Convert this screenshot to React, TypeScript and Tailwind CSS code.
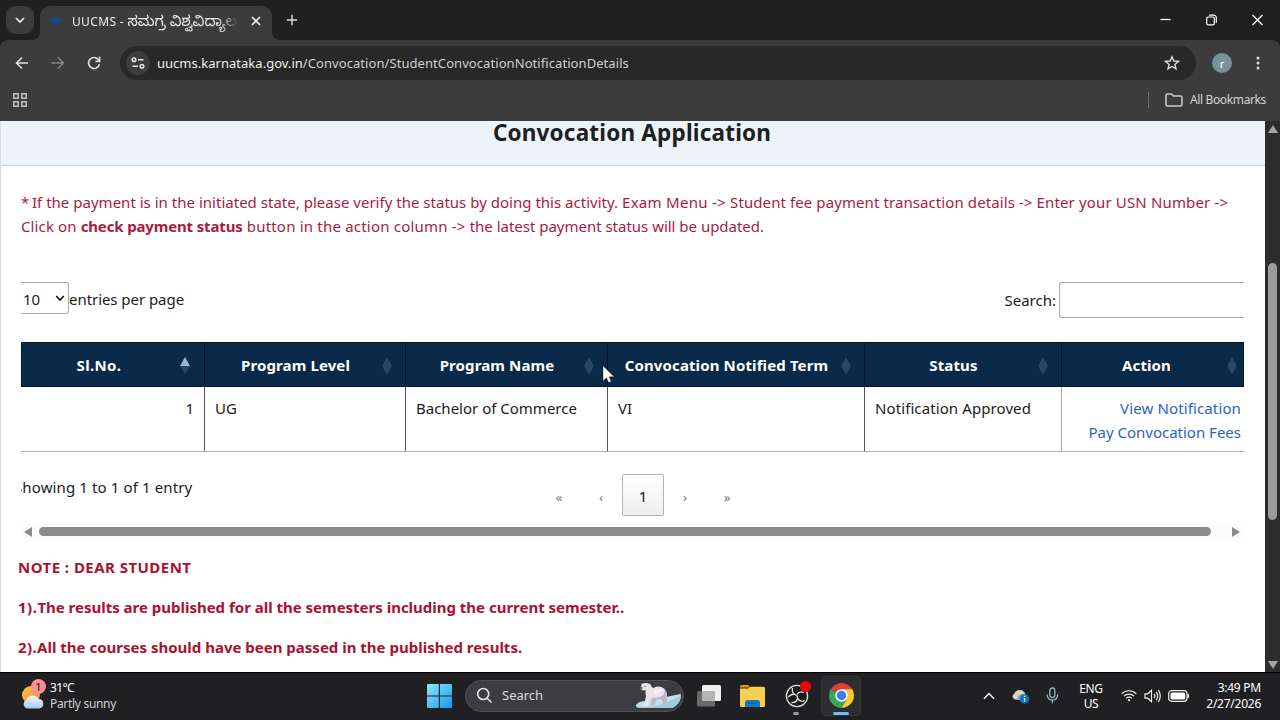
import { ReactNode } from "react";

function SortMark({ asc = false }: { asc?: boolean }) {
  return (
    <svg width="12" height="20" viewBox="0 0 12 20" className="shrink-0">
      <path d="M6 1 11 10H1Z" fill={asc ? "#9fb3d3" : "#274766"} />
      <path d="M1 10H11L6 18.5Z" fill="#274766" />
    </svg>
  );
}

function HeadCell({ children, asc, className }: { children: ReactNode; asc?: boolean; className: string }) {
  return (
    <div className={"flex items-center border-r border-[#02132b] pt-0.5 " + className}>
      <span className="flex-1 text-center whitespace-nowrap">{children}</span>
      <SortMark asc={asc} />
    </div>
  );
}

function TabStrip() {
  return (
    <div className="flex h-10 shrink-0 bg-[#202020]">
      <div className="flex w-10 items-start pt-1.5 pl-1.5">
        <button className="flex h-7 w-7 items-center justify-center rounded-[9px] bg-[#3c3c3c]">
          <svg width="12" height="12" viewBox="0 0 12 12" fill="none" stroke="#f1f1f1" strokeWidth="1.7"><path d="M2 4l4 4 4-4" /></svg>
        </button>
      </div>
      <div className="relative flex w-[232px] items-start pt-1.5">
        <svg className="absolute bottom-0 -left-2" width="8" height="8"><path d="M8 0V8H0A8 8 0 0 0 8 0Z" fill="#3c3c3c" /></svg>
        <svg className="absolute -right-2 bottom-0" width="8" height="8"><path d="M0 0V8H8A8 8 0 0 1 0 0Z" fill="#3c3c3c" /></svg>
        <div className="flex h-[34px] w-full items-center rounded-t-[10px] bg-[#3c3c3c] pb-1 pl-[9px]">
          <svg width="14" height="12" viewBox="0 0 14 12"><path d="M7 1.500 14 5 7 8.500 0 5Z" fill="#164a83" /><path d="M3 6v3q4 2.500 8 0V6L7 8Z" fill="#164a83" /></svg>
          <div className="ml-[9px] h-6 w-[167px] overflow-hidden [mask-image:linear-gradient(to_right,black_88%,transparent)]">
            <div className="text-[12px] leading-[23px] whitespace-nowrap text-[#ececec]">
              <span className="tracking-[0.350px]">UUCMS - </span><span className="text-[14.500px] leading-[22px]">ಸಮಗ್ರ ವಿಶ್ವವಿದ್ಯಾಲಯ</span>
            </div>
          </div>
          <svg className="ml-[12px]" width="10" height="10" viewBox="0 0 10 10" stroke="#f1f1f1" strokeWidth="1.600"><path d="M1 1l8 8M9 1 1 9" /></svg>
        </div>
      </div>
      <div className="flex flex-1 items-center justify-between pl-[14px]">
        <svg width="12" height="12" viewBox="0 0 12 12" stroke="#e0e0e0" strokeWidth="1.400"><path d="M6 .8v10.400M.8 6h10.400" /></svg>
        <div className="flex items-center gap-[35px] pr-[17px]">
          <svg width="11" height="12" viewBox="0 0 11 12" stroke="#fff" strokeWidth="1.300"><path d="M.5 5.500h10" /></svg>
          <svg width="11" height="12" viewBox="0 0 11 12" fill="none" stroke="#fff" strokeWidth="1.200"><rect x=".7" y="3" width="7.600" height="7.800" rx="1.600" /><path d="M3 1.200h4.800a2.500 2.500 0 0 1 2.500 2.500v5" /></svg>
          <svg width="11" height="12" viewBox="0 0 11 12" stroke="#fff" strokeWidth="1.300"><path d="M.5 1l10 10M10.500 1l-10 10" /></svg>
        </div>
      </div>
    </div>
  );
}

function Toolbar() {
  return (
    <div className="h-[81px] shrink-0 bg-[#202020]">
      <div className="h-full rounded-t-lg bg-[#3c3c3c]">
        <div className="flex h-[46px] items-center">
          <svg className="ml-[14px]" width="16" height="14" viewBox="0 0 16 14" fill="none" stroke="#dedede" strokeWidth="1.600"><path d="M14 7H2.500M8 1.500 2.500 7 8 12.500" /></svg>
          <svg className="ml-5" width="16" height="14" viewBox="0 0 16 14" fill="none" stroke="#858585" strokeWidth="1.500"><path d="M1.500 7h12M8 1.500 13.500 7 8 12.500" /></svg>
          <svg className="ml-5" width="16" height="16" viewBox="0 0 16 16" fill="none" stroke="#dedede" strokeWidth="1.700"><path d="M13.400 9.200A5.500 5.500 0 1 1 12.200 4.400L13.800 6" /><path d="M13.600 1.800V6.300H9.400" /></svg>
          <div className="ml-[18px] flex h-[34px] w-[1076px] items-center rounded-full bg-[#282828] pr-[16px] pl-1.5">
            <div className="flex h-6 w-6 items-center justify-center rounded-full bg-[#3c3c3c]">
              <svg width="14" height="12" viewBox="0 0 14 12" fill="none" stroke="#e6e6e6" strokeWidth="1.500"><circle cx="3" cy="2.700" r="1.800" /><path d="M7 2.700h5.500M1.500 9.300h5.500" /><circle cx="11" cy="9.300" r="1.800" /></svg>
            </div>
            <div className="ml-[7px] flex-1 pt-0.5 text-[13px] tracking-[0.070px] whitespace-nowrap text-[#cfcfcf]"><span className="tracking-[0.020px] text-[#efefef]">uucms.karnataka.gov.in</span>/Convocation/StudentConvocationNotificationDetails</div>
            <svg width="16" height="16" viewBox="0 0 16 16" fill="none" stroke="#dcdcdc" strokeWidth="1.400"><path d="M8 1.800 9.800 6l4.600.4-3.500 3 1.100 4.500L8 11.500l-4 2.400 1.100-4.500-3.500-3L6.200 6Z" /></svg>
          </div>
          <div className="ml-4 flex h-5 w-5 items-center justify-center rounded-full bg-[#78909c] text-[11px] leading-none text-white">r</div>
          <svg className="ml-[24px]" width="4" height="14" fill="#dcdcdc"><circle cx="2" cy="2" r="1.500" /><circle cx="2" cy="7" r="1.500" /><circle cx="2" cy="12" r="1.500" /></svg>
        </div>
        <div className="flex h-[28px] items-center justify-between pr-[14px] pl-[13px]">
          <svg width="14" height="14" viewBox="0 0 14 14" fill="none" stroke="#c4c4c4" strokeWidth="1.500"><rect x=".8" y=".8" width="4.400" height="4.400" /><rect x="8.800" y=".8" width="4.400" height="4.400" /><rect x=".8" y="8.800" width="4.400" height="4.400" /><rect x="8.800" y="8.800" width="4.400" height="4.400" /></svg>
          <div className="flex items-center">
            <div className="h-4 w-px bg-[#6a6a6a]" />
            <svg className="ml-4" width="18" height="14" viewBox="0 0 18 14" fill="none" stroke="#cdcdcd" strokeWidth="1.500"><path d="M1 11.500V2.500A1.500 1.500 0 0 1 2.500 1H6.500L8.300 2.900H15.500A1.500 1.500 0 0 1 17 4.400V11.500A1.500 1.500 0 0 1 15.500 13H2.500A1.500 1.500 0 0 1 1 11.500Z" /></svg>
            <span className="ml-[7px] text-[12px] tracking-[-0.370px] text-[#d2d2d2]">All Bookmarks</span>
          </div>
        </div>
      </div>
    </div>
  );
}

function DataTable() {
  return (
    <div className="w-[1223px] overflow-hidden">
      <div className="flex h-[38px] items-start justify-between">
        <div className="flex h-8 items-center">
          <div className="flex h-8 w-[48px] items-center justify-between rounded-r-[3px] border border-l-0 border-[#aaa] pr-[3px] pl-[2px]">
            <span className="pt-0.5">10</span>
            <svg width="10" height="8" viewBox="0 0 10 8" fill="none" stroke="#111" strokeWidth="1.600"><path d="M1.200 2 5 6 8.800 2" /></svg>
          </div>
          <span className="pt-0.5 whitespace-nowrap tracking-[-0.050px]">entries per page</span>
        </div>
        <div className="flex items-center">
          <span>Search:</span>
          <div className="ml-[3px] h-9 w-[185px] rounded-l-[3px] border border-r-0 border-[#aaa]" />
        </div>
      </div>
      <div className="mt-[22px] flex h-[45px] border-y border-[#02132b] bg-[#0b2948] font-bold tracking-[0.120px] text-white">
        <HeadCell asc className="w-[184px] border-l pr-[13px]"><span className="pr-[3px] tracking-[0.350px]">Sl.No.</span></HeadCell>
        <HeadCell className="w-[201px] pr-[12px] pl-[5px]">Program Level</HeadCell>
        <HeadCell className="w-[202px] pr-[12px] pl-[5px]">Program Name</HeadCell>
        <HeadCell className="w-[257px] pr-[12px] pl-[5px]">Convocation Notified Term</HeadCell>
        <HeadCell className="w-[197px] pr-[12px] pl-[5px]">Status</HeadCell>
        <HeadCell className="w-[182px] pr-[5px] pl-[5px]">Action</HeadCell>
      </div>
      <div className="flex h-[65px] border-b border-[#b3b3b3] leading-6 whitespace-nowrap *:border-[#555] *:pt-[9px]">
        <div className="w-[184px] border-r pr-2.5 text-right">1</div>
        <div className="w-[201px] border-r pl-2.5">UG</div>
        <div className="w-[202px] border-r pl-2.5">Bachelor of Commerce</div>
        <div className="w-[257px] border-r pl-2.5">VI</div>
        <div className="w-[197px] border-r border-r-[#aaa]! pl-2.5 tracking-[0.097px]">Notification Approved</div>
        <div className="w-[182px] pr-[3px] text-right text-[#2b62c4]">
          <a className="block tracking-[0.130px]">View Notification</a>
          <a className="block">Pay Convocation Fees</a>
        </div>
      </div>
      <div className="flex h-[72px] pt-[22px]">
        <div className="flex h-[26px] w-[517px] items-center tracking-[0.120px]">
          <div className="flex w-[180px] justify-start overflow-hidden"><span className="ml-[-7px] whitespace-nowrap">Showing 1 to 1 of 1 entry</span></div>
        </div>
        <div className="flex h-[42px] text-[#777] *:flex *:w-[42px] *:items-center *:justify-center">
          <span className="pt-1.5 text-[13px]">«</span>
          <span className="pt-1.5 text-[13px]">‹</span>
          <span className="rounded-[2px] border border-[#b3b3b3] bg-gradient-to-b from-white to-[#eeeeee] pt-0.5 text-[#111]">1</span>
          <span className="pt-1.5 text-[13px]">›</span>
          <span className="pt-1.5 text-[13px]">»</span>
        </div>
      </div>
      <div className="flex h-[15px] items-center bg-[#fcfcfc] pr-[4px] pl-[3px]">
        <svg width="8" height="10"><path d="M8 0V10L0 5Z" fill="#8a8a8a" /></svg>
        <div className="ml-[7px] h-[9px] w-[1172px] rounded-full bg-[#8b8b8b]" />
        <svg className="ml-auto" width="8" height="10"><path d="M0 0V10L8 5Z" fill="#8a8a8a" /></svg>
      </div>
    </div>
  );
}

function PageBody() {
  return (
    <div className="flex h-[551px] shrink-0 overflow-hidden">
      <main className="w-[1265px] border-l border-[#dcdcdc] bg-white text-[15px] text-[#1b1b1b]">
        <div className="h-[45px] border-b border-[#ccd3d9] bg-[#eef3f8]">
          <h1 className="pr-0.5 text-center text-[22.500px] leading-[23px] font-bold tracking-[0.190px] text-[#1c2023]">Convocation Application</h1>
        </div>
        <p className="h-[91px] pt-[24px] pl-5 leading-6 whitespace-nowrap text-[#a91b3e]">
          <span className="tracking-[-0.600px]">* </span>
          <span className="tracking-[0.014px]">If the payment is in the initiated state, please verify the status by doing this activity. </span>
          <span className="tracking-[0.280px]">Exam Menu -&gt; </span>
          <span className="tracking-[0.090px]">Student fee payment transaction details -&gt; </span>
          <span className="tracking-[0.150px]">Enter your USN Number -&gt;</span>
          <br />
          <span className="tracking-[0.120px]">Click on </span>
          <b className="tracking-[-0.150px]">check payment status</b>
          <span className="tracking-[0.200px]"> button in the action column -&gt; </span>
          <span className="tracking-[-0.015px]">the latest payment status will be updated.</span>
        </p>
        <div className="pt-[25px] pl-5"><DataTable /></div>
        <div className="pt-[8px] pl-[17px] leading-10 font-bold whitespace-nowrap text-[#a8122f]">
          <p className="tracking-[0.460px]">NOTE : DEAR STUDENT</p>
          <p><span className="tracking-[0.500px]">1).</span><span className="tracking-[-0.010px]">The results are published for all the semesters including the current semester..</span></p>
          <p><span className="tracking-[0.400px]">2).</span>All the courses should have been passed in the published results.</p>
        </div>
      </main>
      <div className="flex w-[15px] flex-col items-center bg-[#2c2c2c] pt-1">
        <svg width="10" height="8"><path d="M5 0 10 8H0Z" fill="#a3a3a3" /></svg>
        <div className="mt-[130px] h-[257px] w-[9px] rounded-full bg-[#9c9c9c]" />
        <svg className="mt-[141px]" width="10" height="8"><path d="M0 0H10L5 8Z" fill="#a3a3a3" /></svg>
      </div>
    </div>
  );
}

function PolarBear() {
  return (
    <svg width="46" height="26" viewBox="0 0 46 26">
      <path d="M0 22Q2 18.500 9 18L45 11Q45 21 36 25H4Q-.5 25 0 22Z" fill="#c3e0ee" />
      <path d="M1 23.500Q16 25 26 21T45 13Q44 21 36 25H4Q1 25 1 23.500Z" fill="#9ccbe0" />
      <path d="M5.500 2Q5 0 7 .6 10 -.6 13 .8 15 .4 14.800 2.200 15.500 4.500 17.500 5 23 2 28 5.500 32 9 30.500 14.500L31.500 19Q32 21 29.500 21H27L25.500 16.500 21 16 18 22.500H14L15 17 12.500 18 11.500 22.500H7.500Q7 21 8.500 20L10 13Q9 9.500 10 7.500 6 7.500 4.500 6 4.500 4 5.500 2Z" fill="#e9e4ec" />
      <path d="M16 14.500Q23 15.500 26.500 12.500 29.500 10 28 5.500 32 9 30.500 14.500L31.500 19Q32 21 29.500 21H27L25.500 16.500 21 16 18 22.500H14Z" fill="#bdb6c6" />
      <path d="M18 7Q22 4.500 26 7 23 12 18 11Z" fill="#f4f0f5" />
      <circle cx="5.600" cy="5" r=".9" fill="#3c3844" /><circle cx="9" cy="3.300" r=".6" fill="#3c3844" />
    </svg>
  );
}

function ChromeMark() {
  return (
    <svg width="25" height="25" viewBox="0 0 24 24">
      <path d="M12 12 1.608 6A12 12 0 0 1 22.392 6Z" fill="#e0403a" />
      <path d="M12 12 1.608 6A12 12 0 0 0 12 24L17.200 15Z" fill="#36a852" />
      <path d="M12 6H22.392A12 12 0 0 1 12 24L17.200 15Z" fill="#fbcb2e" />
      <circle cx="12" cy="12" r="6" fill="#fff" /><circle cx="12" cy="12" r="4.500" fill="#3b7ded" />
    </svg>
  );
}

function Taskbar() {
  return (
    <footer className="flex h-12 shrink-0 items-center border-t border-black bg-[#202022] pb-[2px] text-white">
      <div className="flex w-[427px] items-center pl-5">
        <div className="relative h-8 w-[27px]">
          <svg className="absolute top-[6px] left-0" width="26" height="25" viewBox="0 0 26 25">
            <defs><linearGradient id="sun" x1="0" y1="0" x2="1" y2="1"><stop stopColor="#f9c846" /><stop offset="1" stopColor="#ee8a23" /></linearGradient><linearGradient id="cloud" x1="0" y1="0" x2="0" y2="1"><stop stopColor="#f3f7fd" /><stop offset="1" stopColor="#a9c8f0" /></linearGradient></defs>
            <circle cx="11" cy="9" r="9" fill="url(#sun)" />
            <path d="M7 22.500a4.500 4.500 0 0 1-.5-8.500 6.500 6.500 0 0 1 12-1 4.800 4.800 0 0 1 1 9.500Z" fill="url(#cloud)" />
          </svg>
          <span className="absolute -top-px left-[11px] flex h-[15px] w-[15px] items-center justify-center rounded-full bg-[#fb8d97] text-[11px] leading-none text-[#2c1416]">1</span>
        </div>
        <div className="ml-[3px] text-[12px] leading-4">
          <div className="tracking-[-0.600px]">31°C</div>
          <div className="tracking-[-0.310px] text-[#cfcfcf]">Partly sunny</div>
        </div>
      </div>
      <svg width="25" height="24" viewBox="0 0 25 24">
        <defs><linearGradient id="win" x1="0" y1="0" x2="1" y2="1"><stop stopColor="#8be8fb" /><stop offset="1" stopColor="#129af0" /></linearGradient></defs>
        <path d="M1 0H11.800V11.400H0V1Q0 0 1 0ZM13 0H24Q25 0 25 1V11.400H13ZM0 12.600H11.800V24H1Q0 24 0 23ZM13 12.600H25V23Q25 24 24 24H13Z" fill="url(#win)" />
      </svg>
      <div className="ml-[13px] flex h-8 w-[219px] items-center rounded-full border border-[#505054] bg-[#3d3d41] pr-[1px] pl-[10px]">
        <svg width="17" height="17" viewBox="0 0 17 17" fill="none" stroke="#e4e4e4" strokeWidth="1.600"><circle cx="7.200" cy="7" r="5.500" /><path d="M11.200 11.200 15.500 15.500" /></svg>
        <span className="ml-[9px] flex-1 text-[13px] text-[#dadada]">Search</span>
        <PolarBear />
      </div>
      <svg className="ml-[13px]" width="24" height="22" viewBox="0 0 24 22">
        <rect x="5" y="0" width="19" height="16" rx="1.500" fill="#f0f0f0" /><rect x="0" y="6" width="18" height="15.500" rx="1.500" fill="#777" fillOpacity=".85" /><path d="M5 6H18V16H5Z" fill="#b5b5b5" />
      </svg>
      <svg className="ml-[19px]" width="25" height="22" viewBox="0 0 25 22">
        <path d="M0 1.500Q0 0 1.500 0H8L10.500 2.500H0Z" fill="#d89b1c" /><path d="M0 3.500H8L10.500 1.800H23.500Q25 1.800 25 3.300V20.500Q25 22 23.500 22H1.500Q0 22 0 20.500Z" fill="#f7d04f" /><path d="M5 22V17.500Q5 15 7.500 15H17.500Q20 15 20 17.500V22Z" fill="#1579c4" /><path d="M8 18.400H17" stroke="#0b4f8d" strokeWidth="1.200" />
      </svg>
      <div className="relative ml-[20px] flex h-10 w-[28px] items-center">
        <svg width="24" height="24" viewBox="0 0 24 24" fill="none" stroke="#dedede" strokeWidth="1.300">
          <circle cx="12" cy="12" r="10.600" fill="#1c1c1e" />
          <path d="M7.500 4Q6.500 8.500 10 10.500 13 11.500 12.500 14.500 11.500 19 6.500 18.500" />
          <path d="M18.800 8.500Q14.500 6.500 12 10.500M19.500 16.500Q16 19 12.500 14.500M3.200 13Q6.500 9.500 10 10.500" />
        </svg>
        <span className="absolute top-[5px] left-[15px] h-[11px] w-[11px] rounded-full bg-[#e60808]" />
        <span className="absolute bottom-[1px] left-[8px] h-[3px] w-[6px] rounded-full bg-[#9a9a9a]" />
      </div>
      <div className="relative ml-[8px] flex h-10 w-10 items-center justify-center rounded border border-[#37373b] bg-[#2d2d30]">
        <ChromeMark />
        <span className="absolute bottom-0 left-[11px] h-[3px] w-4 rounded-full bg-[#5cc3f2]" />
      </div>
      <div className="flex flex-1 items-center pl-[122px]">
        <svg width="12" height="8" viewBox="0 0 12 8" fill="none" stroke="#eee" strokeWidth="1.500"><path d="M1 6.800 6 1.500 11 6.800" /></svg>
        <svg className="ml-[17px]" width="18" height="16" viewBox="0 0 18 16">
          <path d="M3 11.500A3 3 0 0 1 2 6 6 6 0 0 1 12.500 4.500L14 7 8 12Z" fill="#d4d4d2" /><path d="M5 11q0-4 4.500-5l4 0L9 12Z" fill="#a7a7a5" /><circle cx="12.500" cy="10.800" r="4.800" fill="#0f74c9" /><path d="M12.500 10v3.500" stroke="#fff" strokeWidth="1.300" /><circle cx="12.500" cy="8.200" r=".8" fill="#fff" />
        </svg>
        <svg className="ml-[16px]" width="13" height="17" viewBox="0 0 13 17" fill="none" stroke="#8dbcc0" strokeWidth="1.300"><rect x="3.800" y="1" width="5" height="9.500" rx="2.500" /><path d="M1.200 7.500V8A5.200 5.200 0 0 0 11.600 8V7.500M6.400 13.200V16.200" /></svg>
        <div className="ml-[16px] w-[32px] text-center text-[12px] leading-[15px] tracking-[-0.400px]">ENG<br />US</div>
        <svg className="ml-[14px]" width="16" height="13" viewBox="0 0 16 13" fill="none" stroke="#eee" strokeWidth="1.200"><path d="M.7 4.800A10.300 10.300 0 0 1 15.300 4.800M2.900 7.200A7.200 7.200 0 0 1 13.100 7.200M5.100 9.400A4.100 4.100 0 0 1 10.900 9.400" /><circle cx="8" cy="11.200" r="1.100" fill="#eee" stroke="none" /></svg>
        <svg className="ml-[7px]" width="18" height="14" viewBox="0 0 18 14" fill="none" stroke="#eee" strokeWidth="1.200"><path d="M1 4.800H3.800L7.500 1.300V12.700L3.800 9.200H1Z" /><path d="M10 4.800Q11.600 7 10 9.200M12.200 2.900Q15 7 12.200 11.100M14.300 1.200Q18.200 7 14.300 12.800" /></svg>
        <svg className="ml-[6px]" width="22" height="12" viewBox="0 0 22 12"><rect x=".7" y=".7" width="18.300" height="10.600" rx="3" fill="none" stroke="#eee" strokeWidth="1.200" /><rect x="2.500" y="2.500" width="14.700" height="7" rx="1.500" fill="#fff" /><path d="M20 4Q21.300 6 20 8Z" fill="#eee" stroke="#eee" /></svg>
        <div className="ml-auto pr-[19px] text-right text-[12px] leading-4 tracking-[-0.250px]">3:49 PM<br />2/27/2026</div>
      </div>
    </footer>
  );
}

function Pointer() {
  return (
    <svg className="absolute top-[365px] left-[602px]" width="13" height="19" viewBox="0 0 13 19"><path d="M1 .8V16L4.500 12.800 6.600 17.600 9.200 16.400 7.200 11.800H12Z" fill="#fff" stroke="#1a1a1a" strokeWidth=".4" /></svg>
  );
}

export default function App() {
  return (
    <div className="relative flex h-[720px] w-[1280px] flex-col overflow-hidden bg-black font-['Noto_Sans','Noto_Sans_Kannada',sans-serif]">
      <TabStrip />
      <Toolbar />
      <PageBody />
      <Taskbar />
      <Pointer />
    </div>
  );
}
